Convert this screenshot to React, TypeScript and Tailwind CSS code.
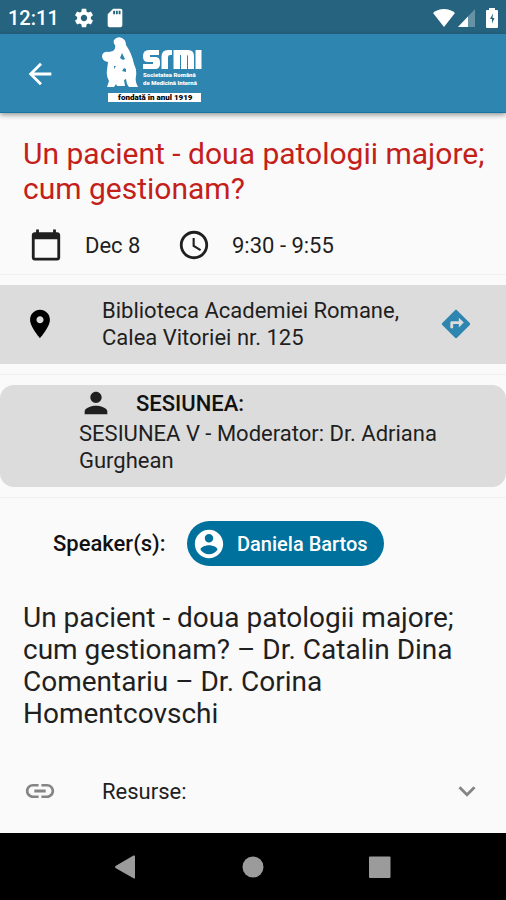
import type { ReactNode } from "react";

type IconProps = { d: string; className?: string };

function Icon({ d, className = "size-[34px]" }: IconProps) {
  return (
    <svg viewBox="0 0 24 24" fill="currentColor" aria-hidden="true" className={`shrink-0 ${className}`}>
      <path d={d} />
    </svg>
  );
}

const icons = {
  back: "M20 11H7.83l5.59-5.59L12 4l-8 8 8 8 1.41-1.41L7.83 13H20v-2z",
  gear: "M19.43 12.98c.04-.32.07-.64.07-.98s-.03-.66-.07-.98l2.11-1.65c.19-.15.24-.42.12-.64l-2-3.46c-.12-.22-.39-.3-.61-.22l-2.49 1c-.52-.4-1.08-.73-1.69-.98l-.38-2.65C14.46 2.18 14.25 2 14 2h-4c-.25 0-.46.18-.49.42l-.38 2.65c-.61.25-1.17.59-1.69.98l-2.49-1c-.23-.09-.49 0-.61.22l-2 3.46c-.13.22-.07.49.12.64l2.11 1.65c-.04.32-.07.65-.07.98s.03.66.07.98l-2.11 1.65c-.19.15-.24.42-.12.64l2 3.46c.12.22.39.3.61.22l2.49-1c.52.4 1.08.73 1.69.98l.38 2.65c.03.24.24.42.49.42h4c.25 0 .46-.18.49-.42l.38-2.65c.61-.25 1.17-.59 1.69-.98l2.49 1c.23.09.49 0 .61-.22l2-3.46c.12-.22.07-.49-.12-.64l-2.11-1.65zM12 15.5c-1.93 0-3.5-1.57-3.5-3.5s1.57-3.5 3.5-3.5 3.5 1.57 3.5 3.5-1.57 3.5-3.5 3.5z",
  sdCard: "M18 2h-8L4.02 8 4 20c0 1.1.9 2 2 2h12c1.1 0 2-.9 2-2V4c0-1.1-.9-2-2-2zm-6 6h-2V4h2v4zm3 0h-2V4h2v4zm3 0h-2V4h2v4z",
  calendar: "M20 3h-1V1h-2v2H7V1H5v2H4c-1.1 0-2 .9-2 2v16c0 1.1.9 2 2 2h16c1.1 0 2-.9 2-2V5c0-1.1-.9-2-2-2zm0 18H4V8h16v13z",
  clock: "M11.99 2C6.47 2 2 6.48 2 12s4.47 10 9.99 10C17.52 22 22 17.52 22 12S17.52 2 11.99 2zM12 20c-4.42 0-8-3.58-8-8s3.58-8 8-8 8 3.58 8 8-3.58 8-8 8zm.5-13H11v6l5.25 3.15.75-1.23-4.5-2.67z",
  pin: "M12 2C8.13 2 5 5.13 5 9c0 5.25 7 13 7 13s7-7.75 7-13c0-3.87-3.13-7-7-7zm0 9.5c-1.38 0-2.5-1.12-2.5-2.5s1.12-2.5 2.5-2.5 2.5 1.12 2.5 2.5-1.12 2.5-2.5 2.5z",
  directions: "M21.71 11.29l-9-9c-.39-.39-1.02-.39-1.41 0l-9 9c-.39.39-.39 1.02 0 1.41l9 9c.39.39 1.02.39 1.41 0l9-9c.39-.38.39-1.01 0-1.41zM14 14.500V12h-4v3H8v-4c0-.55.45-1 1-1h5V7.500l3.500 3.500-3.500 3.500z",
  person: "M12 12c2.21 0 4-1.79 4-4s-1.790-4-4-4-4 1.790-4 4 1.790 4 4 4zm0 2c-2.670 0-8 1.340-8 4v2h16v-2c0-2.660-5.330-4-8-4z",
  account: "M12 2C6.480 2 2 6.480 2 12s4.480 10 10 10 10-4.480 10-10S17.520 2 12 2zm0 3c1.660 0 3 1.340 3 3s-1.340 3-3 3-3-1.340-3-3 1.340-3 3-3zm0 14.200c-2.500 0-4.710-1.280-6-3.220.03-1.990 4-3.080 6-3.080 1.990 0 5.970 1.090 6 3.080-1.290 1.940-3.500 3.220-6 3.220z",
  link: "M3.900 12c0-1.710 1.390-3.100 3.100-3.100h4V7H7c-2.760 0-5 2.240-5 5s2.240 5 5 5h4v-1.900H7c-1.710 0-3.100-1.390-3.100-3.100zM8 13h8v-2H8v2zm9-6h-4v1.900h4c1.710 0 3.100 1.390 3.100 3.100s-1.390 3.100-3.100 3.100h-4V17h4c2.760 0 5-2.240 5-5s-2.240-5-5-5z",
  chevron: "M16.590 8.590L12 13.170 7.410 8.590 6 10l6 6 6-6z",
};

function StatusBar() {
  return (
    <div className="flex h-[34px] items-center bg-[#25637f] pl-2 pr-[3px] pt-px text-white">
      <span className="w-[65px] text-xl font-medium">12:11</span>
      <Icon d={icons.gear} className="size-[22px]" />
      <Icon d={icons.sdCard} className="ml-[9px] size-[22px]" />
      <div className="ml-auto flex items-center gap-[3px]">
        <svg viewBox="0 0 22 18" className="h-[18px] w-[22px]" fill="currentColor" aria-hidden="true">
          <path d="M0 4C6-1.300 16-1.300 22 4L11 18z" />
        </svg>
        <svg viewBox="0 0 18 18" className="size-[18px]" fill="currentColor" aria-hidden="true">
          <path d="M17 0v18H0z" opacity=".3" />
          <path d="M10 7.400V18H0z" />
        </svg>
        <svg viewBox="0 0 22 22" className="ml-[2px] size-[22px]" aria-hidden="true">
          <path d="M8 1h6v2h2q1 0 1 1v16q0 1-1 1H6q-1 0-1-1V4q0-1 1-1h2z" fill="#fff" />
          <path d="M12 6.500L9 12h2V16.500L13.500 11h-2z" fill="#25637f" />
        </svg>
      </div>
    </div>
  );
}

function Logo() {
  return (
    <svg viewBox="0 0 100 66" className="h-[66px] w-[100px]" role="img" aria-label="SRMI">
      <path
        fill="#fff"
        fillRule="evenodd"
        d="M12 3Q15-1 20 1Q24 3 24 8Q30 17 32 27Q35 33 34 39Q33 44 35 48L36 50H27L25 47L24 42L22 43L23 49H15L14 47L12 50H5L7 44Q4 39 5 33L6 25Q0 24 0 19Q1 14 7 15L11 14Q14 12 13 8Q11 6 12 3ZM20 16L18 21L21 23L23 22ZM12 29L12 32L14 29ZM22 31L20 34L24 35L24 32Z"
      />
      <g fill="#fff">
        <path d="M47 13H57V18H48V20H53Q58 20 58 25V27Q58 32 53 32H41V27H51V25H46Q41 25 41 20V19Q41 13 47 13Z" />
        <path d="M59.500 32V20Q59.500 13 66 13H70V18H68Q66 18 66 20V32Z" />
        <path d="M71.500 32V13H86Q92 13 92 19V32H86V20Q86 18 85 18V32H79V18H78V32Z" />
        <path d="M93.500 13H99.500V32H93.500Z" />
      </g>
      <g fill="#fff" fontFamily="Roboto, sans-serif" fontSize="6" fontWeight="900">
        <text x="41" y="40">Societatea Română</text>
        <text x="41" y="48">de Medicină Internă</text>
      </g>
      <path fill="#fff" d="M6 56h93v9H6z" />
      <text x="16" y="63" fill="#000" fontFamily="Roboto, sans-serif" fontSize="8" fontWeight="900">
        fondată în anul 1919
      </text>
    </svg>
  );
}

function AppBar() {
  return (
    <header className="relative flex h-[79px] items-start border-b border-[#1674a3] bg-[#2e86b0] pl-[23px] pt-[3px] text-white shadow-[0_2px_5px_rgba(0,0,0,0.4)]">
      <button type="button" aria-label="Back" className="mt-5">
        <Icon d={icons.back} />
      </button>
      <div className="ml-[45px]">
        <Logo />
      </div>
    </header>
  );
}

function Section({ children }: { children: ReactNode }) {
  return <section className="border-b border-[#f1f1f1] py-[10px]">{children}</section>;
}

export default function App() {
  return (
    <div className="flex min-h-screen flex-col bg-[#fafafa] font-['Roboto',sans-serif] text-[#1f1f1f]">
      <StatusBar />
      <AppBar />

      <main className="flex-1 text-[22px] leading-[27px]">
        <div className="border-b border-[#f1f1f1] pb-3 pl-[23px] pr-4 pt-[23px]">
          <h1 className="text-[30px] leading-[35px] text-[#c4201a]">
            Un pacient - doua patologii majore; cum gestionam?
          </h1>
          <div className="mt-[22px] flex items-center pl-[6px]">
            <Icon d={icons.calendar} />
            <span className="ml-[22px] w-[92px]">Dec 8</span>
            <Icon d={icons.clock} />
            <span className="ml-[21px]">9:30 - 9:55</span>
          </div>
        </div>

        <Section>
          <div className="flex h-[79px] items-center bg-[#dcdcdc] pb-px pl-[23px] pr-[33px]">
            <Icon d={icons.pin} className="size-[34px] text-black" />
            <p className="ml-[45px] flex-1">Biblioteca Academiei Romane, Calea Vitoriei nr. 125</p>
            <button type="button" aria-label="Directions" className="text-[#2e86b0]">
              <Icon d={icons.directions} />
            </button>
          </div>
        </Section>

        <Section>
          <div className="rounded-[14px] bg-[#dcdcdc] pb-[13px] pl-[79px] pr-10 pt-px">
            <div className="flex items-center">
              <Icon d={icons.person} />
              <h2 className="ml-[23px] font-medium text-[#111]">SESIUNEA:</h2>
            </div>
            <p>SESIUNEA V - Moderator: Dr. Adriana Gurghean</p>
          </div>
        </Section>

        <div className="flex items-center pl-[53px] pt-[23px]">
          <span className="w-[134px] font-medium text-[#111]">Speaker(s):</span>
          <button
            type="button"
            className="flex h-[45px] items-center gap-[11px] rounded-full bg-[#00719c] pl-[5px] pr-4 text-xl font-medium text-white"
          >
            <Icon d={icons.account} />
            Daniela Bartos
          </button>
        </div>

        <p className="px-[23px] pt-9 text-[28px] leading-8">
          Un pacient - doua patologii majore;
          <br />
          cum gestionam? – Dr. Catalin Dina
          <br />
          Comentariu – Dr. Corina
          <br />
          Homentcovschi
        </p>

        <button
          type="button"
          aria-expanded="false"
          className="mt-[22px] flex h-[78px] w-full items-center pl-[23px] pr-[22px] text-left"
        >
          <Icon d={icons.link} className="size-[34px] text-[#858585]" />
          <span className="ml-[45px] flex-1">Resurse:</span>
          <Icon d={icons.chevron} className="size-[34px] text-[#858585]" />
        </button>
      </main>

      <nav className="flex h-[67px] items-center justify-center gap-[93px] bg-black text-[#9b9b9b]">
        <button type="button" aria-label="Back">
          <svg viewBox="0 0 34 34" className="size-[34px]" fill="currentColor">
            <path d="M26 6.500V27.500Q26 29 24.500 28.200L6.500 18Q5.500 17 6.500 16L24.500 5.600Q26 5 26 6.500Z" />
          </svg>
        </button>
        <button type="button" aria-label="Home">
          <svg viewBox="0 0 34 34" className="size-[34px]" fill="currentColor">
            <circle cx="17" cy="17" r="10.500" />
          </svg>
        </button>
        <button type="button" aria-label="Recent apps">
          <svg viewBox="0 0 34 34" className="size-[34px]" fill="currentColor">
            <rect x="6" y="6.500" width="21.500" height="21.500" rx="1" />
          </svg>
        </button>
      </nav>
    </div>
  );
}
